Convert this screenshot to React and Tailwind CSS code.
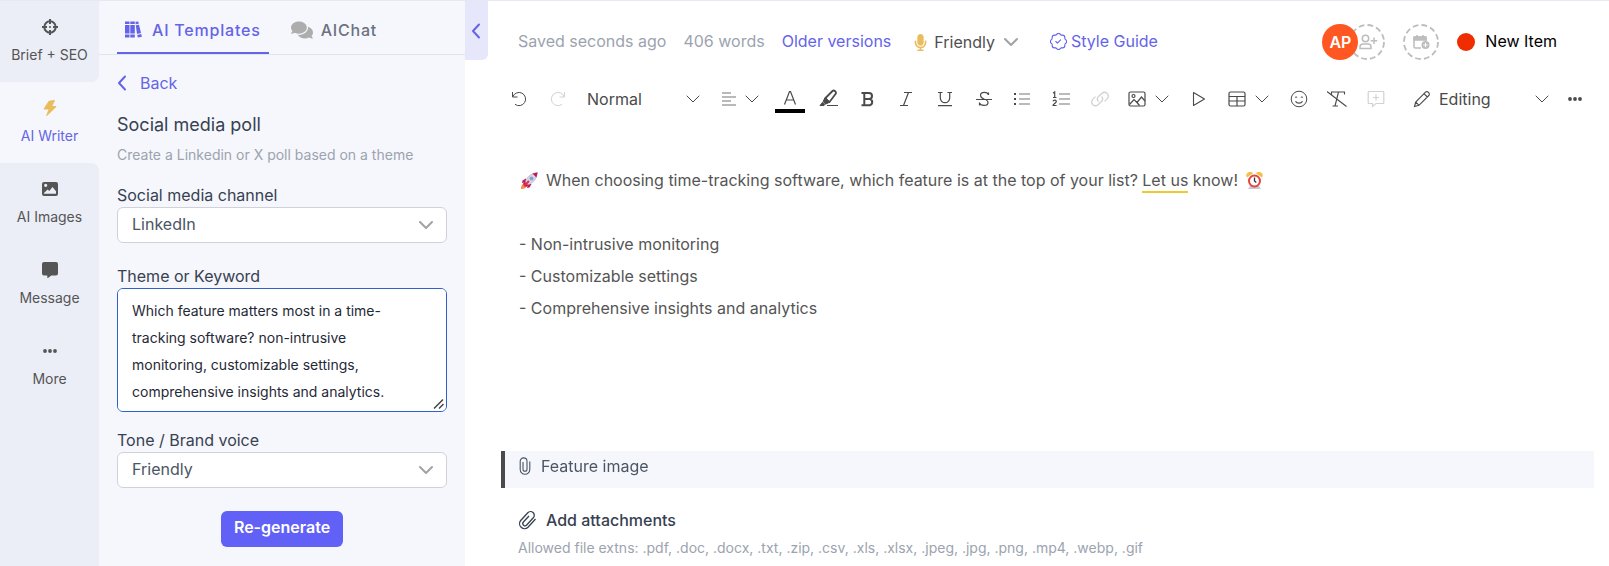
import { FaComments, FaMicrophone } from "react-icons/fa";
import { BsPatchCheck } from "react-icons/bs";

function Svg({ size = 18, box = 18, sw = 1, className = "", children }) {
  return (
    <svg
      width={size}
      height={size}
      viewBox={`0 0 ${box} ${box}`}
      fill="none"
      stroke="currentColor"
      strokeWidth={sw}
      className={`shrink-0 ${className}`}
      aria-hidden="true"
    >
      {children}
    </svg>
  );
}

const ChevronDown = ({ className = "", sw = 1 }) => (
  <svg width="14" height="14" viewBox="0 0 14 14" fill="none" stroke="currentColor" strokeWidth={sw} strokeLinecap="round" strokeLinejoin="round" className={`shrink-0 ${className}`} aria-hidden="true">
    <path d="M1 4l6 6 6-6" />
  </svg>
);

const ChevronLeft = ({ className = "" }) => (
  <svg width="10" height="16" viewBox="0 0 10 16" fill="none" stroke="currentColor" strokeWidth="2" strokeLinecap="round" strokeLinejoin="round" className={`shrink-0 ${className}`} aria-hidden="true">
    <path d="M8 1.5L2 8l6 6.500" />
  </svg>
);

const Books = () => (
  <Svg size={17} box={17}>
    <g fill="currentColor" stroke="none">
      <path d="M0 .5h4.500V3H0zM0 4h4.500v8.500H0zM0 13.500h4.500v3H0z" />
      <path d="M5.300.5h4.500V3H5.300zM5.300 4h4.500v8.500H5.300zM5.300 13.500h4.500v3H5.300z" />
      <path d="M10.500.8 13.300.5l.5 2.300-3.200.5zM10.800 4.200l3.200-.5 2 8.300-4 .9zM12.200 13.900l4-.9.700 2.700-4 .9z" />
    </g>
  </Svg>
);

const icons = {
  brief: (
    <Svg size={16} box={16} sw={2}>
      <circle cx="8" cy="8" r="5.700" />
      <path d="M8 0v5M8 11v5M0 8h5M11 8h5" />
      <circle cx="8" cy="8" r="1" fill="currentColor" stroke="none" />
    </Svg>
  ),
  bolt: (
    <Svg size={16} box={16} className="text-[#e9bd5c]">
      <path d="M7.300.8 12.300 0c.5 0 .8.300.6.700L10.300 6h3.500c.6 0 .8.700.4 1.100l-9 8.700c-.5.4-1.100 0-.9-.6L6.500 9.500H2.300c-.6 0-.8-.5-.5-.9L6.500 1.300c.2-.3.500-.5.800-.5z" fill="currentColor" stroke="none" />
    </Svg>
  ),
  image: (
    <Svg size={16} box={16}>
      <path fillRule="evenodd" d="M2 1h12a2 2 0 0 1 2 2v10a2 2 0 0 1-2 2H2a2 2 0 0 1-2-2V3a2 2 0 0 1 2-2zm1.700 1.700a1.600 1.600 0 1 0 0 3.200 1.600 1.600 0 0 0 0-3.200zM2 12.800h12v-2.600L10.500 6 7.300 10 5.600 8.500 2 12z" fill="currentColor" stroke="none" />
    </Svg>
  ),
  message: (
    <Svg size={16} box={16}>
      <path d="M2 0h12a2 2 0 0 1 2 2v9.500a2 2 0 0 1-2 2H9.300L6 16c-.4.2-.7 0-.7-.4v-2.100H2a2 2 0 0 1-2-2V2a2 2 0 0 1 2-2z" fill="currentColor" stroke="none" />
    </Svg>
  ),
  more: (
    <Svg size={16} box={16}>
      <g fill="currentColor" stroke="none">
        <circle cx="3" cy="8" r="1.900" />
        <circle cx="8" cy="8" r="1.900" />
        <circle cx="13" cy="8" r="1.900" />
      </g>
    </Svg>
  ),
};

const navItems = [
  { label: "Brief + SEO", icon: icons.brief, style: "rounded-br-lg bg-[#ebeef6] text-[#555]" },
  { label: "AI Writer", icon: icons.bolt, style: "bg-[#f5f7fc] text-[#6564e8]", current: true },
  { label: "AI Images", icon: icons.image, style: "rounded-tr-lg bg-[#ebeef6] text-[#555]" },
  { label: "Message", icon: icons.message, style: "bg-[#ebeef6] text-[#555]" },
  { label: "More", icon: icons.more, style: "bg-[#ebeef6] text-[#555]" },
];

function Sidebar() {
  return (
    <nav className="flex w-[99px] shrink-0 flex-col bg-[#f5f7fc]">
      {navItems.map((n) => (
        <button
          key={n.label}
          aria-current={n.current ? "page" : undefined}
          className={`flex h-[81px] flex-col items-center gap-2.5 pt-[18px] text-sm leading-5 whitespace-nowrap ${n.style}`}
        >
          {n.icon}
          <span>{n.label}</span>
        </button>
      ))}
      <div className="flex-1 bg-[#ebeef6]" />
    </nav>
  );
}

function SelectField({ id, label, value }) {
  return (
    <div className="flex flex-col">
      <label htmlFor={id} className="text-base leading-6 text-[#374151]">
        {label}
      </label>
      <div className="relative">
        <select
          id={id}
          defaultValue={value}
          className="h-9 w-full appearance-none rounded-md border border-[#cfd2da] bg-white px-3.5 pb-0.5 text-base text-[#4b5563]"
        >
          <option>{value}</option>
        </select>
        <ChevronDown sw={2} className="pointer-events-none absolute top-[11px] right-3.5 text-[#a3a3a3]" />
      </div>
    </div>
  );
}

function TemplatePanel() {
  return (
    <section className="w-[366px] shrink-0 bg-[#f5f7fc]">
      <div role="tablist" className="flex h-[54px] gap-[22px] border-b border-[#e2e4ec] pl-[18px] text-base font-medium tracking-wider">
        <button role="tab" aria-selected="true" className="flex h-[53px] items-center gap-2.5 border-b-2 border-[#6564e8] px-2 pt-1.5 text-[#6564e8]">
          <Books />
          AI Templates
        </button>
        <button role="tab" aria-selected="false" className="flex h-[53px] items-center gap-2 pt-1 text-[#6b7280]">
          <FaComments size={22} className="text-[#adadad]" />
          AIChat
        </button>
      </div>
      <div className="flex flex-col px-[18px] pt-4">
        <button className="flex h-6 items-center gap-[13px] self-start text-base text-[#6564e8]">
          <ChevronLeft />
          Back
        </button>
        <h1 className="mt-4 text-lg leading-7 text-[#374151]">Social media poll</h1>
        <p className="mt-1 text-sm leading-6 text-[#9ca3af]">Create a Linkedin or X poll based on a theme</p>
        <div className="mt-4">
          <SelectField id="channel" label="Social media channel" value="LinkedIn" />
        </div>
        <div className="mt-[21px] flex flex-col">
          <label htmlFor="theme" className="text-base leading-6 text-[#374151]">
            Theme or Keyword
          </label>
          <div className="relative flex">
            <textarea
              id="theme"
              defaultValue="Which feature matters most in a time-tracking software? non-intrusive monitoring, customizable settings, comprehensive insights and analytics."
              className="h-[124px] w-full resize-none rounded-md border border-[#2f62c9] bg-white py-2 pr-12 pl-3.5 text-sm leading-[27px] text-[#1f2937] outline-none"
            />
            <Svg size={12} box={12} sw={1.5} className="pointer-events-none absolute right-0.5 bottom-0.5 text-[#444]">
              <path d="M1 10.500 10 1.500M6 10.500 10.500 6" />
            </Svg>
          </div>
        </div>
        <div className="mt-4">
          <SelectField id="tone" label="Tone / Brand voice" value="Friendly" />
        </div>
        <button className="mt-[23px] h-9 self-center rounded-md bg-[#6161f7] px-[13px] pb-1 text-base font-semibold text-white">
          Re-generate
        </button>
      </div>
    </section>
  );
}

function EditorHeader() {
  return (
    <header className="flex h-9 items-center pr-[52px] pl-[18px] text-base whitespace-nowrap">
      <div className="flex items-center gap-[17px] pb-0.5 text-[#9ca3af]">
        <span>Saved seconds ago</span>
        <span>406 words</span>
        <a href="#versions" className="text-[#6564e8]">Older versions</a>
      </div>
      <button className="ml-[21px] flex items-center gap-[5px] text-[#4f4f4f]">
        <FaMicrophone size={17} className="text-[#e9bd5c]" />
        Friendly
        <ChevronDown sw={2} className="ml-1 text-[#a3a3a3]" />
      </button>
      <a href="#style" className="ml-8 flex items-center gap-1 pb-0.5 text-[#6564e8]">
        <BsPatchCheck size={17} />
        Style Guide
      </a>
      <div className="ml-auto flex items-center">
        <span className="z-10 flex size-9 items-center justify-center rounded-full bg-[#ff5722] text-base font-semibold text-white">AP</span>
        <button aria-label="Add assignee" className="-ml-[9px] text-[#bdbdbd]">
          <Svg size={36} box={36} sw={1.5}>
            <circle cx="18" cy="18" r="17" strokeWidth="1.800" strokeDasharray="5.700 3.200" />
            <circle cx="16.500" cy="14.500" r="3.200" />
            <path d="M11 24.500v-1.500a3 3 0 0 1 3-3h5a3 3 0 0 1 3 3v1.500zM25 13.500v6.500M21.700 16.800h6.500" />
          </Svg>
        </button>
        <button aria-label="Set due date" className="ml-[18px] text-[#bdbdbd]">
          <Svg size={36} box={36} sw={1.5}>
            <circle cx="18" cy="18" r="17" strokeWidth="1.800" strokeDasharray="5.700 3.200" />
            <path d="M18 24h-5.500a1.500 1.500 0 0 1-1.500-1.500v-8a1.500 1.500 0 0 1 1.500-1.500h9a1.500 1.500 0 0 1 1.500 1.500V17" />
            <path d="M11 16v-3h12v3zM14 11v3M20 11v3" fill="currentColor" />
            <circle cx="22.500" cy="21" r="4" fill="currentColor" stroke="none" />
            <path d="M22.500 18.800v4.400M20.300 21h4.400" stroke="#fff" strokeWidth="1" />
          </Svg>
        </button>
        <span className="ml-[18px] size-[18px] rounded-full bg-[#f02d00]" />
        <span className="ml-2.5 pb-0.5 text-black">New Item</span>
      </div>
    </header>
  );
}

const dots = (x) => [4, 9, 14].map((y) => <path key={y} d={`M${x} ${y}h11`} stroke="#a3a3a3" strokeWidth="1.500" />);

const Undo = ({ className = "" }) => (
  <Svg className={className}>
    <path d="M2.500 2v5h5M2.800 6.800A6.600 6.600 0 1 1 5 14.300" />
  </Svg>
);

const formatTools = [
  {
    name: "Text color",
    icon: (
      <span className="flex w-[30px] flex-col items-center">
        <Svg>
          <path d="M3.500 15.500 8.500 2.500h1l5 13M5.200 11h7.600" strokeWidth="1.200" />
        </Svg>
        <span className="mt-0.5 h-1 w-[30px] bg-black" />
      </span>
    ),
    className: "pt-1",
  },
  {
    name: "Highlight",
    icon: (
      <Svg size={20} box={20}>
        <path d="M6 9.500 13.500 2a1.600 1.600 0 0 1 2.300 0l.7.7a1.600 1.600 0 0 1 0 2.300L10.500 13l-3.800.8-1.500-1.500z" strokeWidth="1.800" />
        <path d="M6.500 8.500 10.800 13l-4 2-2.600-2.600zM1 16.500l2.700-3.300 2.300 2.300-1 1z" fill="currentColor" />
        <path d="M8 16.500h11" />
      </Svg>
    ),
  },
  { name: "Bold", icon: <Svg sw={2}><path d="M2.500 3h7.500a3 3 0 0 1 0 6H5h5.800a3.200 3.200 0 0 1 0 6.200H2.500M5.300 3v12" /></Svg> },
  { name: "Italic", icon: <Svg sw={1.2}><path d="M7 2.500h8M3 15.500h8M11.500 2.500l-5 13" /></Svg> },
  { name: "Underline", icon: <Svg sw={1.2}><path d="M2 2.500h4.500M11.500 2.500H16M4.300 2.500V8a4.700 4.700 0 0 0 9.400 0V2.500M2 15.700h14" /></Svg> },
  { name: "Strikethrough", icon: <Svg sw={1.2}><path d="M13.500 5V2.500M13.500 4.800C12.500 1.500 5.500 1.300 5.500 5.300c0 2 1.500 3 3.500 3.700M9 9c2.500.8 4 1.500 4 3.400 0 4-7.500 3.800-8.500.4M4.500 12.500V15.500M1 9.500h16" /></Svg> },
  {
    name: "Bulleted list",
    icon: <Svg>{dots(6)}<path d="M1 4h2M1 9h2M1 14h2" strokeWidth="2" /></Svg>,
  },
  {
    name: "Numbered list",
    icon: <Svg>{dots(7)}<path d="M1 3.200 2.700 2v5.500M1 7.500h3.500M1 11.200c.5-1.600 3.300-1.400 3.300.3 0 1.500-3.300 2.500-3.300 4h3.600" strokeWidth="1.200" /></Svg>,
  },
  {
    name: "Link",
    icon: (
      <Svg size={20} box={20} sw={1.3} className="text-[#d2d2d2]">
        <path d="M8.500 12.500a3.600 3.600 0 0 1 0-5L12 4.300a3.500 3.500 0 0 1 5 0l.3.3a3.500 3.500 0 0 1 0 5L14.500 12.400M11.500 7.500a3.600 3.600 0 0 1 0 5L8 15.700a3.500 3.500 0 0 1-5 0l-.3-.3a3.500 3.500 0 0 1 0-5L5.500 7.600" />
      </Svg>
    ),
  },
];

const insertTools = [
  {
    name: "Emoji",
    icon: <Svg><circle cx="9" cy="9" r="7.800" /><path d="M5.500 11.200c1.500 2.600 5.500 2.600 7 0M5.200 7.500c.4-.7 1.400-.7 1.800 0M11 7.500c.4-.7 1.400-.7 1.800 0" strokeWidth="1.200" /></Svg>,
  },
  {
    name: "Clear formatting",
    icon: <Svg size={20} box={20} sw={1.1}><path d="M0 2.500 19.500 17.500M4.500 5.500V3h13v2.500M11.500 3l-3.500 14M5.500 17h5.500" /></Svg>,
  },
  {
    name: "Comment",
    icon: <Svg className="text-[#d2d2d2]" sw={1.2}><path d="M2 1.500h14a.800.800 0 0 1 .800.800v10.400a.800.800 0 0 1-.800.800H9l-3.500 3v-3H2a.800.800 0 0 1-.800-.800V2.300A.800.800 0 0 1 2 1.500zM9 4.500v6M6 7.500h6" /></Svg>,
  },
];

function ToolButton({ name, icon, className = "" }) {
  return (
    <button aria-label={name} className={`flex items-center justify-center ${className}`}>
      {icon}
    </button>
  );
}

function Toolbar() {
  return (
    <div role="toolbar" aria-label="Formatting" className="mt-5 flex h-[38px] pr-4 text-base text-[#4a4a4a]">
      <div className="grid w-[77px] shrink-0 grid-cols-2">
        <ToolButton name="Undo" icon={<Undo />} />
        <ToolButton name="Redo" icon={<Undo className="-scale-x-100 text-[#d2d2d2]" />} />
      </div>
      <div className="relative flex w-[133px] shrink-0">
        <select aria-label="Paragraph style" className="w-full appearance-none bg-transparent pl-2.5">
          <option>Normal</option>
        </select>
        <ChevronDown className="pointer-events-none absolute top-3 right-2.5" />
      </div>
      <button aria-label="Alignment" className="flex w-[61px] shrink-0 items-center gap-[9px] pl-3">
        <Svg size={14} box={14} sw={1.5} className="text-[#a3a3a3]">
          <path d="M0 1h9M0 5h14M0 9h9M0 13h14" />
        </Svg>
        <ChevronDown />
      </button>
      <div className="grid w-[348px] shrink-0 grid-cols-9">
        {formatTools.map((t) => (
          <ToolButton key={t.name} {...t} />
        ))}
      </div>
      <button aria-label="Insert image" className="flex w-[60px] shrink-0 items-center gap-[9px] pl-[9px]">
        <Svg sw={1.2}>
          <rect x="1" y="2" width="16" height="14" rx="1.500" />
          <circle cx="5.500" cy="6" r="1.500" />
          <path d="M1.500 14.500 6 9.500l3 3 4.500-5.500 3.500 4M9 12.500l2.500 3" />
        </Svg>
        <ChevronDown />
      </button>
      <button aria-label="Insert video" className="flex w-[39px] shrink-0 items-center justify-center">
        <Svg sw={1.1}><path d="M3.500 2.500v13L14.500 9z" strokeLinejoin="round" /></Svg>
      </button>
      <button aria-label="Insert table" className="flex w-[62px] shrink-0 items-center gap-[9px] pl-2.5">
        <Svg>
          <rect x="1" y="2" width="16" height="14" rx="1.500" strokeWidth="1.200" />
          <path d="M1 6.500h16M1 11h16M9 6.500V16" strokeWidth="1.200" />
        </Svg>
        <ChevronDown />
      </button>
      <div className="grid w-[115px] shrink-0 grid-cols-3">
        {insertTools.map((t) => (
          <ToolButton key={t.name} {...t} />
        ))}
      </div>
      <div className="relative flex min-w-[120px] flex-1 items-center">
        <Svg className="pointer-events-none absolute left-[18px]" sw={1.1}>
          <path d="M1.500 16.500 2.700 12 12.500 2.200a1.900 1.900 0 0 1 2.700 0l.6.6a1.900 1.900 0 0 1 0 2.700L6 15.300zM11 3.700l3.300 3.300M2.700 12l3.300 3.300" />
        </Svg>
        <select aria-label="Mode" className="h-full w-full appearance-none bg-transparent pl-11">
          <option>Editing</option>
        </select>
        <ChevronDown className="pointer-events-none absolute right-[7px]" />
      </div>
      <ToolButton name="More" className="w-[37px] shrink-0" icon={icons.more} />
    </div>
  );
}

const Rocket = () => (
  <svg role="img" aria-label="rocket" width="17" height="17" viewBox="0 0 17 17" className="mr-2 ml-0.5 inline-block align-[-3px]">
    <path d="M5 6.500 1.500 8.500 1 11l4-1zM10.500 12 8.500 15.500 6 16l1-4z" fill="#c2185b" />
    <path d="M0 17c0-3 1-5.500 3.500-5.500L5.500 13.500c0 2.500-2.500 3.500-5.500 3.500z" fill="#ff8a4c" />
    <path d="M4 11C5 6 9 1.500 16.500.500 15.500 8 11 12 6 13z" fill="#dcd6e4" stroke="#a98bb0" strokeWidth=".5" />
    <path d="M11.500 1.600 16.500.500l-1.100 5zM3.500 9.500l4 4-2.500 1.500-3-3z" fill="#c2185b" />
    <circle cx="10.500" cy="6.500" r="2" fill="#7ea6d8" />
    <path d="M3 14 8 9" stroke="#d8324a" strokeWidth="2" />
  </svg>
);

const Clock = () => (
  <svg role="img" aria-label="alarm clock" width="17" height="17" viewBox="0 0 17 17" className="ml-2 inline-block align-[-3px]">
    <path d="M4 14h9l2 3H2z" fill="#c9c9d2" />
    <path d="M1 5.500A3.200 3.200 0 0 1 7 1.500zM16 5.500a3.200 3.200 0 0 0-6-4z" fill="#f5c04a" />
    <circle cx="8.500" cy="9" r="5.500" fill="#fff" stroke="#e5453f" strokeWidth="2" />
    <path d="M8.500 5.500V9l1.800 1.500" stroke="#333" strokeWidth="1.300" fill="none" />
  </svg>
);

function Editor() {
  return (
    <main className="relative min-w-0 flex-1 bg-white pt-[23px] pl-[35px]">
      <button aria-label="Collapse panel" className="absolute top-0 left-0 flex h-[59px] w-[23px] items-center justify-center rounded-br-md bg-[#e6e7fb] pr-0.5 text-[#6564e8]">
        <ChevronLeft />
      </button>
      <EditorHeader />
      <Toolbar />
      <article className="mt-[46px] px-[19px] text-base leading-8 text-[#555]">
        <p>
          <Rocket />
          When choosing time-tracking software, which feature is at the top of your list?{" "}
          <span className="border-b-2 border-[#f0c92f] pb-px">Let us</span> know!
          <Clock />
        </p>
        <p>&nbsp;</p>
        <p>- Non-intrusive monitoring</p>
        <p>- Customizable settings</p>
        <p>- Comprehensive insights and analytics</p>
      </article>
      <section className="mt-[127px] mr-[15px] ml-px flex h-[37px] items-start gap-2.5 border-l-4 border-[#4a4a4a] bg-[#f5f7fc] pt-[3px] pl-3.5 text-base leading-6 text-[#4b5563]">
        <svg width="12" height="18" viewBox="0 0 12 18" fill="none" stroke="currentColor" strokeWidth="1.100" className="mt-[3px]" aria-hidden="true">
          <path d="M10.800 4.500v8a4.800 4.800 0 0 1-9.600 0V4.300a3.400 3.400 0 0 1 6.800 0v8a2 2 0 0 1-4 0V5" />
        </svg>
        Feature image
      </section>
      <div className="pt-5 pl-[18px]">
        <button className="flex h-6 items-center gap-2 text-base font-medium text-[#374151]">
          <Svg size={20} box={20} sw={1.3}>
            <path d="M17.500 8.500 10 16.800a5 5 0 0 1-7.300-6.800L9.800 2.300a3.700 3.700 0 0 1 5.500 5L8.700 14.500a2.200 2.200 0 0 1-3.300-3L11 5.500" transform="translate(0 .5)" />
          </Svg>
          Add attachments
        </button>
        <p className="mt-1 text-sm leading-6 text-[#9ca3af]">
          Allowed file extns: .pdf, .doc, .docx, .txt, .zip, .csv, .xls, .xlsx, .jpeg, .jpg, .png, .mp4, .webp, .gif
        </p>
      </div>
    </main>
  );
}

export default function App() {
  return (
    <div className="flex min-h-screen border-t border-[#e6e8f2] font-['Inter',sans-serif]">
      <Sidebar />
      <TemplatePanel />
      <Editor />
    </div>
  );
}
